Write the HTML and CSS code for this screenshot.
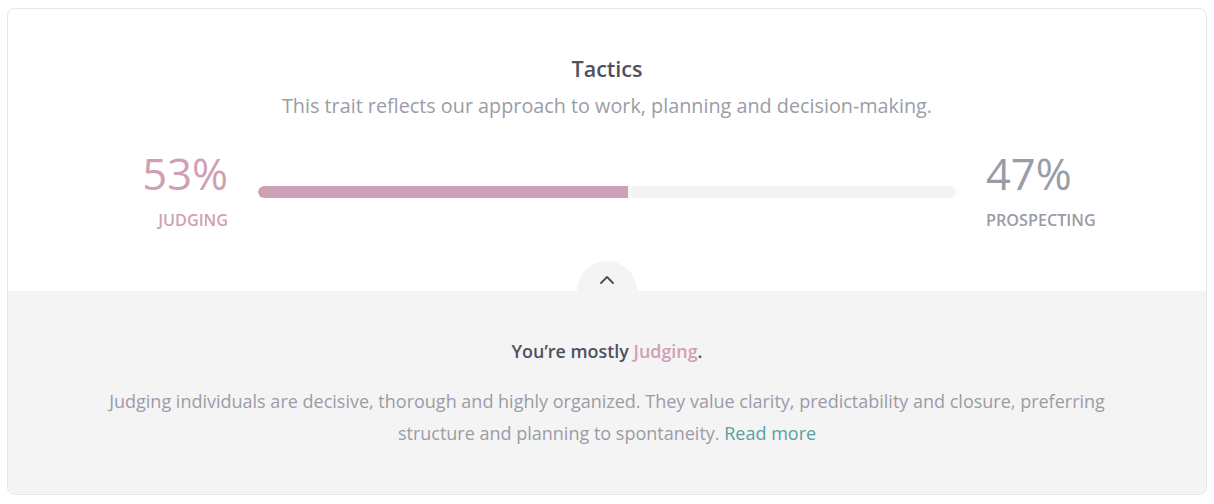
FILE: index.html
```html
<!DOCTYPE html>
<html lang="en">
<head>
<meta charset="utf-8">
<title>Tactics</title>
<link rel="stylesheet" href="styles.css">
</head>
<body>
<div class="card">
  <section class="top">
    <h2 class="title">Tactics</h2>
    <p class="subtitle">This trait reflects our approach to work, planning and decision-making.</p>
    <div class="scale">
      <div class="side side-left">
        <div class="pct pct-pink">53%</div>
        <div class="label label-pink">Judging</div>
      </div>
      <div class="bar"><div class="bar-fill" style="width:53%"></div></div>
      <div class="side side-right">
        <div class="pct pct-gray">47%</div>
        <div class="label label-gray">Prospecting</div>
      </div>
    </div>
  </section>
  <section class="bottom">
    <button class="toggle" aria-label="Collapse">
      <svg width="16" height="10" viewBox="0 0 16 10"><path d="M2 8 L8 2 L14 8" fill="none" stroke="#4c4f5e" stroke-width="1.8" stroke-linecap="round" stroke-linejoin="round"/></svg>
    </button>
    <p class="mostly">You’re mostly <span class="hl">Judging</span>.</p>
    <p class="desc">Judging individuals are decisive, thorough and highly organized. They value clarity, predictability and closure, preferring structure and planning to spontaneity. <a class="more" href="#">Read more</a></p>
  </section>
</div>
</body>
</html>
```

FILE: styles.css
```css
* { box-sizing: border-box; }
html, body { margin: 0; padding: 0; background: #fff; }
body {
  padding: 8px 7px 0 7px;
  font-family: "Open Sans", "Noto Sans", sans-serif;
}
.card {
  width: 1200px;
  height: 487px;
  border: 1px solid #e6e6e8;
  border-radius: 8px;
  overflow: hidden;
  display: flex;
  flex-direction: column;
}
.top {
  height: 282px;
  padding-top: 45px;
  display: flex;
  flex-direction: column;
  align-items: center;
}
.title {
  margin: 0;
  font-size: 21.5px;
  line-height: 30px;
  font-weight: 600;
  color: #4e5162;
}
.subtitle {
  margin: 8px 0 0;
  font-size: 19.8px;
  line-height: 28px;
  color: #9a9ca7;
}
.scale {
  margin-top: 29px;
  display: flex;
  align-items: flex-start;
  gap: 30px;
}
.side { width: 120px; }
.side-left { text-align: right; }
.side-right { text-align: left; }
.pct {
  font-size: 43.5px;
  line-height: 50px;
  font-weight: 400;
}
.pct-pink { color: #cf9fb6; }
.pct-gray { color: #9a9ca7; }
.label {
  margin-top: 10px;
  font-size: 16.2px;
  line-height: 22px;
  font-weight: 600;
  text-transform: uppercase;
}
.label-pink { color: #cf9fb6; }
.label-gray { color: #9a9ca7; }
.bar {
  margin-top: 37px;
  width: 698px;
  height: 12px;
  border-radius: 6px;
  background: #f4f4f5;
  overflow: hidden;
}
.bar-fill {
  height: 100%;
  background: #cf9fb6;
  border-radius: 6px 0 0 6px;
}
.bottom {
  position: relative;
  flex: 1;
  background: #f4f4f4;
  padding-top: 48px;
  display: flex;
  flex-direction: column;
  align-items: center;
}
.toggle {
  position: absolute;
  top: -30px;
  left: 50%;
  margin-left: -30px;
  width: 60px;
  height: 60px;
  border-radius: 50%;
  border: 0;
  background: #f4f4f4;
  padding: 14px 0 0 0;
  display: flex;
  justify-content: center;
  align-items: flex-start;
  cursor: pointer;
}
.mostly {
  position: relative;
  margin: 0;
  font-size: 17.9px;
  line-height: 24px;
  font-weight: 600;
  color: #4e5162;
}
.hl { color: #cf9fb6; }
.desc {
  margin: 22px 0 0;
  max-width: 1000px;
  text-align: center;
  font-size: 18px;
  line-height: 32px;
  color: #9a9ca7;
}
.more {
  color: #5aa0a2;
  text-decoration: none;
}
```
